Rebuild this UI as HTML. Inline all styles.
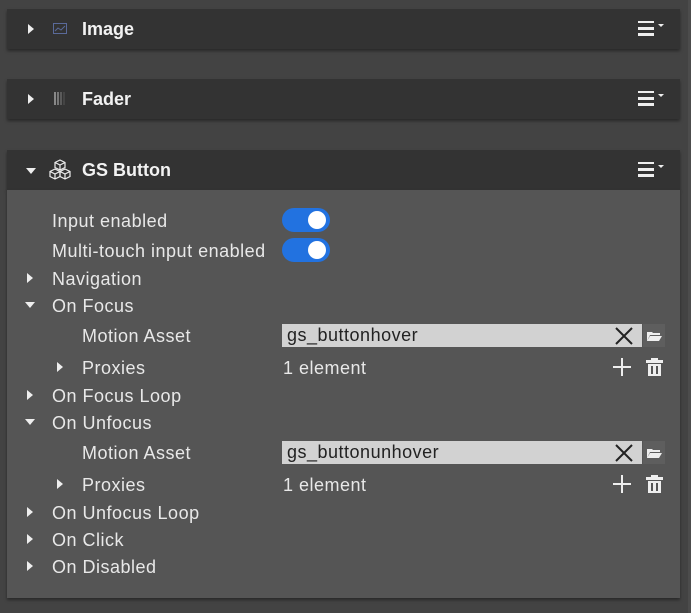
<!DOCTYPE html>
<html><head><style>
body{margin:0;width:691px;height:613px;background:#434343;font-family:"Liberation Sans",sans-serif;position:relative;overflow:hidden}
.hdr{position:absolute;left:7px;width:673px;height:40px;background:#333;box-shadow:0 2px 3px rgba(0,0,0,.4)}
.hdr .t{position:absolute;left:75px;top:10px;color:#f2f2f2;font-weight:bold;font-size:18px}
.tri{position:absolute;width:0;height:0}
.tr{border-top:5px solid transparent;border-bottom:5px solid transparent;border-left:6px solid #eee}
.td{border-left:5px solid transparent;border-right:5px solid transparent;border-top:6px solid #eee}
.menu{position:absolute;left:631px;top:12px}
.body{position:absolute;left:7px;top:190px;width:673px;height:408px;background:#555;box-shadow:0 2px 3px rgba(0,0,0,.4)}
.l{position:absolute;color:#e8e8e8;font-size:18px;letter-spacing:0.5px;line-height:20px}
.tog{position:absolute;left:282px;width:48px;height:24px;border-radius:12px;background:#2272e0}
.tog:after{content:"";position:absolute;right:4px;top:3px;width:18px;height:18px;border-radius:50%;background:#fff}
.inp{position:absolute;left:282px;width:360px;height:23px;background:#d2d2d2;color:#222;font-size:18px;letter-spacing:0.5px;line-height:23px;text-indent:5px}
</style></head><body>
<div class="hdr" style="top:9px">
<div class="tri tr" style="left:21px;top:15px"></div>
<svg style="position:absolute;left:46px;top:14px" width="14" height="11"><rect x="0.5" y="0.5" width="13" height="10" fill="none" stroke="#5a6a9a"/><path d="M2 8 L5 5 L8 7 L12 3" stroke="#5a6a9a" fill="none"/></svg>
<div class="t">Image</div>
<svg class="menu" width="30" height="16"><rect x="0" y="0" width="16" height="2" fill="#eee"/><rect x="0" y="6" width="16" height="3" fill="#eee"/><rect x="0" y="12" width="16" height="3" fill="#eee"/><path d="M20 3 L26 3 L23 6Z" fill="#eee"/></svg>
</div>
<div class="hdr" style="top:79px">
<div class="tri tr" style="left:21px;top:15px"></div>
<svg style="position:absolute;left:47px;top:13px" width="12" height="13"><rect x="0" width="2" height="13" fill="#888"/><rect x="3" width="2" height="13" fill="#777"/><rect x="6" width="2" height="13" fill="#5a5a5a"/><rect x="9" width="2" height="13" fill="#444"/></svg>
<div class="t">Fader</div>
<svg class="menu" width="30" height="16"><rect x="0" y="0" width="16" height="2" fill="#eee"/><rect x="0" y="6" width="16" height="3" fill="#eee"/><rect x="0" y="12" width="16" height="3" fill="#eee"/><path d="M20 3 L26 3 L23 6Z" fill="#eee"/></svg>
</div>
<div class="hdr" style="top:150px">
<div class="tri td" style="left:19px;top:18px"></div>
<svg style="position:absolute;left:42px;top:9px" width="22" height="21" fill="none" stroke="#eee" stroke-width="1.2"><path d="M11 1 L16 3.5 L16 8.5 L11 11 L6 8.5 L6 3.5Z M6 3.5 L11 6 L16 3.5 M11 6 V11"/><path d="M6 10 L11 12.5 L11 17.5 L6 20 L1 17.5 L1 12.5Z M1 12.5 L6 15 L11 12.5 M6 15 V20"/><path d="M16 10 L21 12.5 L21 17.5 L16 20 L11 17.5 L11 12.5Z M11 12.5 L16 15 L21 12.5 M16 15 V20"/></svg>
<div class="t">GS Button</div>
<svg class="menu" width="30" height="16"><rect x="0" y="0" width="16" height="2" fill="#eee"/><rect x="0" y="6" width="16" height="3" fill="#eee"/><rect x="0" y="12" width="16" height="3" fill="#eee"/><path d="M20 3 L26 3 L23 6Z" fill="#eee"/></svg>
</div>
<div class="body"></div>
<div class="l" style="left:52px;top:211px">Input enabled</div>
<div class="tog" style="top:208px"></div>
<div class="l" style="left:52px;top:241px">Multi-touch input enabled</div>
<div class="tog" style="top:238px"></div>
<div class="tri tr" style="left:27px;top:273px"></div><div class="l" style="left:52px;top:269px">Navigation</div>
<div class="tri td" style="left:25px;top:302px"></div><div class="l" style="left:52px;top:296px">On Focus</div>
<div class="l" style="left:82px;top:326px">Motion Asset</div>
<div class="inp" style="top:324px">gs_buttonhover</div>
<div class="tri tr" style="left:57px;top:362px"></div><div class="l" style="left:82px;top:358px">Proxies</div>
<div class="l" style="left:283px;top:358px">1 element</div>
<div class="tri tr" style="left:27px;top:390px"></div><div class="l" style="left:52px;top:386px">On Focus Loop</div>
<div class="tri td" style="left:25px;top:419px"></div><div class="l" style="left:52px;top:413px">On Unfocus</div>
<div class="l" style="left:82px;top:443px">Motion Asset</div>
<div class="inp" style="top:441px">gs_buttonunhover</div>
<div class="tri tr" style="left:57px;top:479px"></div><div class="l" style="left:82px;top:475px">Proxies</div>
<div class="l" style="left:283px;top:475px">1 element</div>
<div class="tri tr" style="left:27px;top:507px"></div><div class="l" style="left:52px;top:503px">On Unfocus Loop</div>
<div class="tri tr" style="left:27px;top:534px"></div><div class="l" style="left:52px;top:530px">On Click</div>
<div class="tri tr" style="left:27px;top:561px"></div><div class="l" style="left:52px;top:557px">On Disabled</div>
<svg style="position:absolute;left:615px;top:327px" width="18" height="18"><path d="M1 1 L17 17 M17 1 L1 17" stroke="#222" stroke-width="2"/></svg>
<svg style="position:absolute;left:615px;top:444px" width="18" height="18"><path d="M1 1 L17 17 M17 1 L1 17" stroke="#222" stroke-width="2"/></svg>
<div style="position:absolute;left:643px;top:324px;width:22px;height:23px;background:#5e5e5e"></div>
<div style="position:absolute;left:643px;top:441px;width:22px;height:23px;background:#5e5e5e"></div>
<svg style="position:absolute;left:646px;top:330px" width="17" height="12"><path d="M1 2 H6 L7 3 H14 V5 H4 L1 11Z M4 6 H16 L13 11 H1Z" fill="#eee"/></svg>
<svg style="position:absolute;left:646px;top:447px" width="17" height="12"><path d="M1 2 H6 L7 3 H14 V5 H4 L1 11Z M4 6 H16 L13 11 H1Z" fill="#eee"/></svg>
<svg style="position:absolute;left:612px;top:357px" width="20" height="20"><path d="M10 1 V19 M1 10 H19" stroke="#eee" stroke-width="2"/></svg>
<svg style="position:absolute;left:612px;top:474px" width="20" height="20"><path d="M10 1 V19 M1 10 H19" stroke="#eee" stroke-width="2"/></svg>
<svg style="position:absolute;left:645px;top:357px" width="19" height="20"><path d="M6 1 H13 V3 H18 V6 H1 V3 H6Z M3 7 H16 V19 H3Z" fill="#eee"/><path d="M7 9 V17 M12 9 V17" stroke="#555" stroke-width="2"/></svg>
<svg style="position:absolute;left:645px;top:474px" width="19" height="20"><path d="M6 1 H13 V3 H18 V6 H1 V3 H6Z M3 7 H16 V19 H3Z" fill="#eee"/><path d="M7 9 V17 M12 9 V17" stroke="#555" stroke-width="2"/></svg>
<div style="position:absolute;left:688px;top:0;width:3px;height:613px;background:#4c4c4c"></div>
</body></html>
